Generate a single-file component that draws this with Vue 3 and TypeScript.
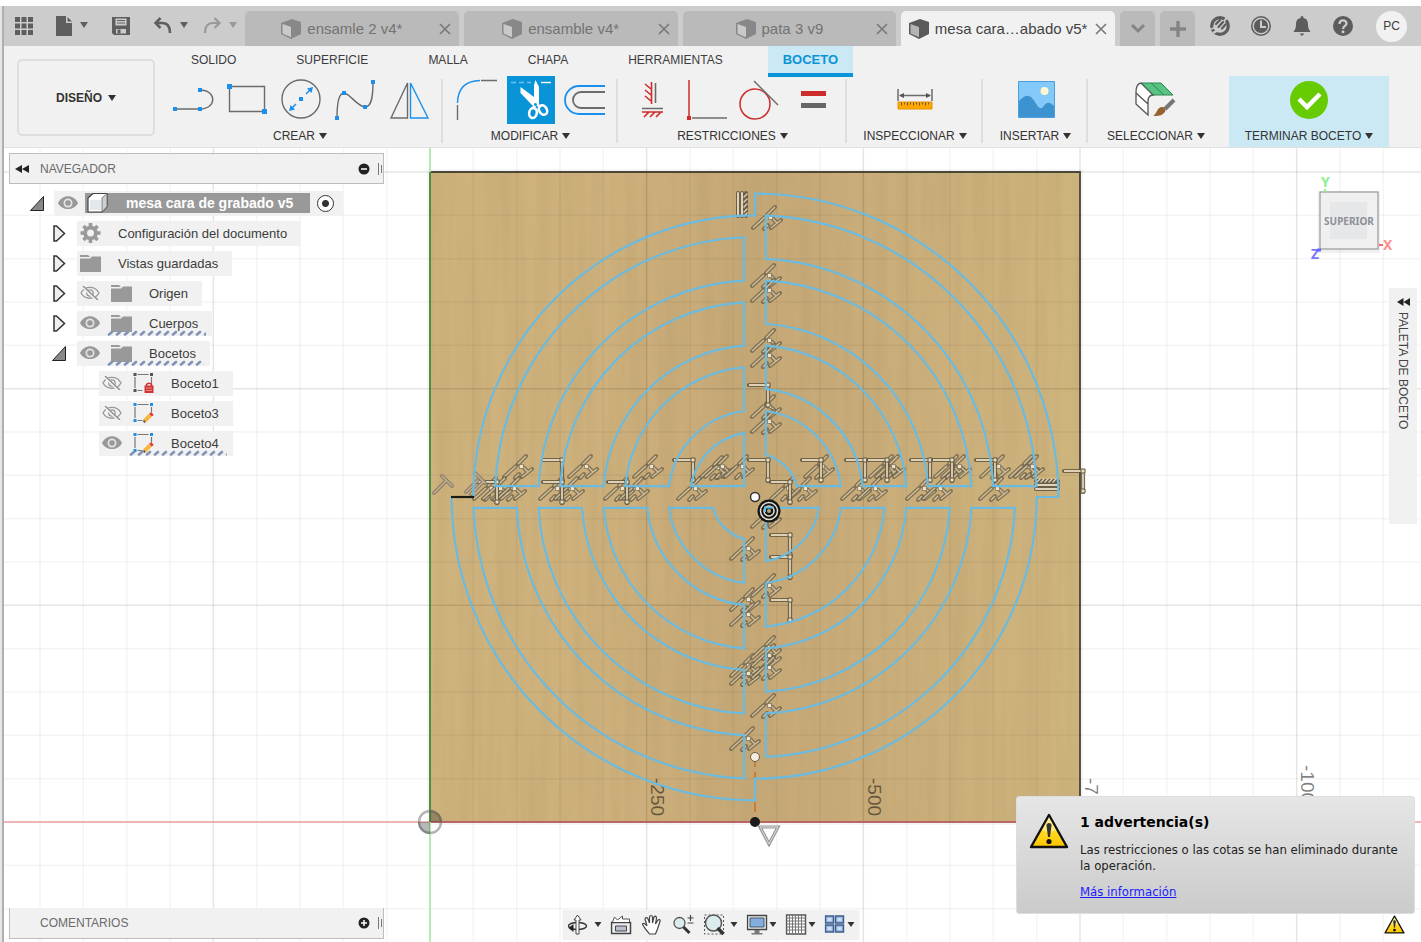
<script setup lang="ts">
import { ref } from 'vue'

interface DocTab { title: string; active: boolean }
const docTabs = ref<DocTab[]>([
  { title: 'ensamle 2 v4*', active: false },
  { title: 'ensamble v4*', active: false },
  { title: 'pata 3 v9', active: false },
  { title: 'mesa cara…abado v5*', active: true },
])

const workspaces = ['SOLIDO', 'SUPERFICIE', 'MALLA', 'CHAPA', 'HERRAMIENTAS', 'BOCETO']
const activeWorkspace = ref('BOCETO')

interface TreeRow {
  label: string
  level: 1 | 2
  open?: boolean
  eye?: 'on' | 'off'
  icon: 'i-gear' | 'i-folder' | 'i-sketch-lock' | 'i-sketch-edit'
  hatched?: boolean
}
const rows = ref<TreeRow[]>([
  { label: 'Configuración del documento', level: 1, open: false, icon: 'i-gear' },
  { label: 'Vistas guardadas', level: 1, open: false, icon: 'i-folder' },
  { label: 'Origen', level: 1, open: false, eye: 'off', icon: 'i-folder' },
  { label: 'Cuerpos', level: 1, open: false, eye: 'on', icon: 'i-folder', hatched: true },
  { label: 'Bocetos', level: 1, open: true, eye: 'on', icon: 'i-folder', hatched: true },
  { label: 'Boceto1', level: 2, eye: 'off', icon: 'i-sketch-lock' },
  { label: 'Boceto3', level: 2, eye: 'off', icon: 'i-sketch-edit' },
  { label: 'Boceto4', level: 2, eye: 'on', icon: 'i-sketch-edit', hatched: true },
])
function toggleEye(row: TreeRow) {
  row.eye = row.eye === 'on' ? 'off' : 'on'
}

// Sketch geometry: concentric quarter rings separated by a cross-shaped gap.
const cx = 755
const cy = 497
const unit = 65 / 6
const along = (r: number) => Math.sqrt(r * r - unit * unit)

function quarterRing(sx: number, sy: number, outer: number, inner: number): string {
  const ro = outer * unit
  const ri = inner * unit
  const sweep = sx * sy < 0 ? 1 : 0
  const pt = (a: number, b: number) => `${(cx + sx * a).toFixed(2)} ${(cy + sy * b).toFixed(2)}`
  let d = `M${pt(unit, along(ro))}A${ro} ${ro} 0 0 ${sweep} ${pt(along(ro), unit)}`
  d += inner === 0
    ? `L${pt(unit, unit)}`
    : `L${pt(along(ri), unit)}A${ri} ${ri} 0 0 ${1 - sweep} ${pt(unit, along(ri))}`
  return d + 'Z'
}
const evenBands = [[24, 20], [18, 14], [12, 8], [6, 0]]
const oddBands = [[26, 22], [20, 16], [14, 10], [8, 4]]
const rings: string[] = [
  ...evenBands.map(([o, i]) => quarterRing(-1, -1, o, i)),
  ...oddBands.map(([o, i]) => quarterRing(1, -1, o, i)),
  ...oddBands.map(([o, i]) => quarterRing(-1, 1, o, i)),
  ...evenBands.map(([o, i]) => quarterRing(1, 1, o, i)),
]
const big = 28 * unit
const mid = 26 * unit
const outline =
  `M${cx - mid} ${cy}A${mid} ${mid} 0 0 1 ${cx} ${cy - mid}V${cy - big}` +
  `A${big} ${big} 0 0 1 ${cx + big} ${cy}H${cx + mid}` +
  `A${mid} ${mid} 0 0 1 ${cx} ${cy + mid}V${cy + big}` +
  `A${big} ${big} 0 0 1 ${cx - big} ${cy}`

// Constraint glyph anchors on the sketch plane.
const parallels: number[][] = [
  [521, 466], [586, 466], [651, 466], [717, 467], [722, 466], [742, 466],
  [491, 488], [500, 488], [514, 488], [557, 488], [572, 488], [622, 488], [637, 488], [695, 488],
  [770, 217], [769, 275], [769, 290], [769, 340], [769, 355], [769, 406], [769, 421],
  [822, 466], [887, 466], [893, 466], [952, 466], [959, 466], [998, 466], [1027, 466], [1032, 466],
  [788, 488], [805, 488], [859, 488], [875, 488], [924, 488], [940, 488], [997, 488],
  [748, 548], [748, 599], [748, 614], [748, 665], [748, 673], [748, 738],
  [769, 516], [769, 585], [769, 647], [769, 655], [769, 667], [769, 705],
]
const perpendiculars: number[][] = [
  [562, 460], [562, 482], [497, 482], [627, 482], [693, 460], [768, 460], [768, 385], [790, 482],
  [821, 460], [865, 460], [887, 460], [930, 460], [952, 460], [995, 460], [1083, 471],
  [790, 535], [790, 557], [790, 600],
]
const step = 130 / 3
const gridX = Array.from({ length: 60 }, (_, i) => i - 9)
const gridY = Array.from({ length: 40 }, (_, i) => i - 15)
const rulerLabels = [
  { text: '-250', x: 651, y: 778 },
  { text: '-500', x: 868, y: 778 },
  { text: '-750', x: 1085, y: 778 },
  { text: '-1000', x: 1301, y: 765 },
]
</script>

<template>
  <div class="app">
    <svg class="defs" width="0" height="0" aria-hidden="true">
      <symbol id="i-caret" viewBox="0 0 8 6"><path d="M0 0h8L4 6z" fill="currentColor" /></symbol>
      <symbol id="i-cube" viewBox="0 0 20 20">
        <path d="M0 4 11 0l9 3v12l-10 5L0 15z" fill="currentColor" />
        <path d="M1.500 5 10 8v10.200L1.500 14.500z" fill="#fff" fill-opacity=".55" />
      </symbol>
      <symbol id="i-close" viewBox="0 0 12 12"><path d="M1 1l10 10M11 1 1 11" stroke="currentColor" stroke-width="1.600" /></symbol>
      <symbol id="i-eye-on" viewBox="0 0 20 14">
        <path d="M0 7C4-2 16-2 20 7 16 15 4 15 0 7z" fill="#999" /><circle cx="10" cy="7" r="4.500" fill="#e4e4e4" /><circle cx="10" cy="7" r="2.800" fill="#999" />
      </symbol>
      <symbol id="i-eye-off" viewBox="0 0 20 14">
        <path d="M1 7c4-7.500 14-7.500 18 0-4 7-14 7-18 0z" fill="none" stroke="#999" stroke-width="1.300" /><circle cx="10" cy="7" r="3.200" fill="none" stroke="#999" stroke-width="1.300" />
        <path d="M2 0l15 14" stroke="#f1f1f1" stroke-width="3" /><path d="M3 0l15 14" stroke="#888" stroke-width="1.300" />
      </symbol>
      <symbol id="i-folder" viewBox="0 0 21 17">
        <path d="M0 0h8l2 2H0zM0 3.500h10l2-2h9V17H0z" fill="#999" />
      </symbol>
      <symbol id="i-gear" viewBox="0 0 20 20">
        <g fill="#999"><circle cx="10" cy="10" r="7.300" />
          <path d="M8.200 0h3.600v20H8.200zM0 8.200h20v3.600H0zM1.700 4.200l2.500-2.500 14.100 14.100-2.500 2.500zM15.800 1.700l2.500 2.500L4.200 18.300l-2.500-2.500z" /></g>
        <circle cx="10" cy="10" r="3.500" fill="#f1f1f1" />
      </symbol>
      <symbol id="i-sketch-lock" viewBox="0 0 20 20">
        <path d="M4 1.500h11M1.500 4v11M18 4v7M4 17.500h5" stroke="#777" stroke-width="1.200" />
        <path d="M0 0h3v3H0zM16.500 0h3v3h-3zM0 16h3v3H0z" fill="#555" />
        <path d="M13 13v-1.500a3 3 0 0 1 5 0V13" fill="none" stroke="#cf2f2f" stroke-width="1.500" /><path d="M11 12.500h9V20h-9z" fill="#d03434" /><path d="M12.500 15h6M12.500 17.500h6" stroke="#e88" />
      </symbol>
      <symbol id="i-sketch-edit" viewBox="0 0 20 20">
        <path d="M4 1.500h11M1.500 4v11M18 4v5M4 17.500h5" stroke="#777" stroke-width="1.200" />
        <path d="M0 0h3v3H0zM16.500 0h3v3h-3zM0 16h3v3H0z" fill="#1d8fe8" />
        <path d="m11 18 6-6" stroke="#f6b73c" stroke-width="4" /><path d="m17 12 2-1.500" stroke="#e5323c" stroke-width="4" /><path d="m10 19 1.500-1" stroke="#555" stroke-width="2.500" />
      </symbol>
      <symbol id="i-warn" viewBox="0 0 40 36">
        <path d="M20 2 38 34H2z" fill="url(#warnFill)" stroke="#111" stroke-width="2.400" stroke-linejoin="round" />
        <path d="M20 4 27 17Q20 21 13 17z" fill="#fff" fill-opacity=".4" />
        <path d="M17.500 12.500a2.500 2.500 0 0 1 5 0L21 24h-2z" fill="#333" /><circle cx="20" cy="28.500" r="2.600" fill="#111" />
      </symbol>
      <linearGradient id="warnFill" x1="0" y1="0" x2="0" y2="1"><stop offset="0" stop-color="#fff04a" /><stop offset="1" stop-color="#ffc400" /></linearGradient>
    </svg>

    <header class="topbar">
      <div class="quick">
        <button class="plain" aria-label="Panel de datos">
          <svg width="18" height="18"><path d="M0 0h5v5H0zM6.500 0h5v5h-5zM13 0h5v5h-5zM0 6.500h5v5H0zM6.500 6.500h5v5h-5zM13 6.500h5v5h-5zM0 13h5v5H0zM6.500 13h5v5h-5zM13 13h5v5h-5z" fill="#5e5e5e" /></svg>
        </button>
        <button class="plain" aria-label="Archivo">
          <svg width="34" height="20"><path d="M1 0h10v7h6v13H1z" fill="#5e5e5e" /><path d="m12.500 1 4.500 4.500h-4.500z" fill="#5e5e5e" /><path d="M25 6h8l-4 6z" fill="#5e5e5e" /></svg>
        </button>
        <button class="plain" aria-label="Guardar">
          <svg width="20" height="18"><path d="M1 0h18v18H3l-2-2z" fill="#5e5e5e" /><path d="M4.500 1.500h11v7h-11zM5 12h10v4.500H5z" fill="#ccc" /><path d="M6 3.500h8M6 6h8" stroke="#5e5e5e" stroke-width="1.200" /><path d="M6.500 12.500h3v4h-3z" fill="#5e5e5e" /></svg>
        </button>
        <div class="history">
          <button class="plain" aria-label="Deshacer">
            <svg width="36" height="20"><path d="M7.500 2 2.500 7l5 5M3 7h6q8 0 8 10" fill="none" stroke="#5e5e5e" stroke-width="2.500" /><path d="M27 6h8l-4 6z" fill="#5e5e5e" /></svg>
          </button>
          <button class="plain" aria-label="Rehacer">
            <svg width="36" height="20"><path d="m11.500 2 5 5-5 5M16 7h-6Q2 7 2 17" fill="none" stroke="#999" stroke-width="2.200" /><path d="M26 6h8l-4 6z" fill="#999" /></svg>
          </button>
        </div>
      </div>
      <nav class="doc-tabs" aria-label="Documentos">
        <div v-for="t in docTabs" :key="t.title" class="doc-tab" :class="{ active: t.active }">
          <button class="plain doc-name"><svg class="cube" width="20" height="20"><use href="#i-cube" /></svg>{{ t.title }}</button>
          <button class="plain doc-close" aria-label="Cerrar"><svg width="12" height="12"><use href="#i-close" /></svg></button>
        </div>
        <button class="plain tab-extra" aria-label="Lista de pestañas"><svg width="16" height="12"><path d="m2 2 6 6 6-6" fill="none" stroke="#858585" stroke-width="3" /></svg></button>
        <button class="plain tab-extra" aria-label="Nueva pestaña"><svg width="16" height="16"><path d="M8 0v16M0 8h16" stroke="#858585" stroke-width="3.500" /></svg></button>
      </nav>
      <div class="account">
        <button class="plain" aria-label="Extensiones">
          <svg width="20" height="20"><circle cx="10" cy="10" r="8.300" fill="none" stroke="#5c5c5c" stroke-width="3.200" /><path d="M11 9 19-1" stroke="#ccc" stroke-width="2" /><path d="M0 13.500 6 11" stroke="#ccc" stroke-width="1.500" /><path d="m6 8 4-4M8.500 11 13 6M12 12.500l3.500-4" stroke="#5c5c5c" stroke-width="2.200" stroke-linecap="round" /><path d="m3 17 7-4" stroke="#ccc" stroke-width="2.500" /></svg>
        </button>
        <button class="plain" aria-label="Estado de trabajos">
          <svg width="20" height="20"><circle cx="10" cy="10" r="10" fill="#5c5c5c" /><circle cx="10" cy="10" r="7.800" fill="none" stroke="#ccc" stroke-width="1.400" /><path d="M10 4.500V11h5" fill="none" stroke="#ccc" stroke-width="2" /></svg>
        </button>
        <button class="plain" aria-label="Notificaciones">
          <svg width="20" height="20"><path d="M10 0q1.500 0 1.500 2c4 1 4.500 4 4.500 7s1 4.500 2.500 7h-17C3 13.500 4 12 4 9s.500-6 4.500-7Q8.500 0 10 0zM7.500 17.500h5L10 20z" fill="#5c5c5c" /></svg>
        </button>
        <button class="plain" aria-label="Ayuda">
          <svg width="20" height="20"><circle cx="10" cy="10" r="10" fill="#5c5c5c" /><path d="M6.500 8c0-5 7-4.500 7-.500 0 2.500-3.500 2.500-3.500 5.500" fill="none" stroke="#ccc" stroke-width="2.300" /><circle cx="10" cy="15.800" r="1.500" fill="#ccc" /></svg>
        </button>
        <button class="plain avatar">PC</button>
      </div>
    </header>

    <section class="ribbon">
      <button class="design">DISEÑO <svg width="8" height="6"><use href="#i-caret" /></svg></button>
      <div class="ribbon-main">
        <nav class="ws-tabs" aria-label="Entornos">
          <button v-for="w in workspaces" :key="w" class="plain ws-tab" :class="{ active: w === activeWorkspace }" @click="activeWorkspace = w">{{ w }}</button>
        </nav>
        <div class="groups">
          <div class="group create">
            <div class="tools">
              <button class="plain tool" aria-label="Línea"><svg width="48" height="48"><path d="M7 33h25M32 14c17 0 17 19 0 19" fill="none" stroke="#6b6b6b" stroke-width="1.400" /><path d="M5 31h4v4H5zM30 31h4v4h-4zM30 12h4v4h-4z" fill="#1b8fea" /></svg></button>
              <button class="plain tool" aria-label="Rectángulo"><svg width="48" height="48"><path d="M7.500 10.500h35v25h-35z" fill="none" stroke="#6b6b6b" stroke-width="1.400" /><path d="M5 8h5v5H5zM40 33h5v5h-5z" fill="#1b8fea" /></svg></button>
              <button class="plain tool" aria-label="Círculo"><svg width="48" height="48"><circle cx="25" cy="23" r="19" fill="none" stroke="#6b6b6b" stroke-width="1.400" /><path d="m15 33 5-5m10-10 5-5" stroke="#1b8fea" stroke-width="1.500" /><path d="M23 21h4v4h-4zM37 11l-1.500 6-4.500-4.500zM13 35l1.500-6 4.500 4.500z" fill="#1b8fea" /></svg></button>
              <button class="plain tool" aria-label="Spline"><svg width="48" height="48"><path d="M7 42C7 28 9 17 14 17S28 31 35 31c6 0 8-8 8-25" fill="none" stroke="#6b6b6b" stroke-width="1.400" /><path d="M5 40h4v4H5zM12 15h4v4h-4zM33 29h4v4h-4zM41 4h4v4h-4z" fill="#1b8fea" /></svg></button>
              <button class="plain tool" aria-label="Simetría"><svg width="48" height="48"><path d="M23.500 7v35H7z" fill="none" stroke="#6b6b6b" stroke-width="1.400" /><path d="M26.500 7v35H44z" fill="none" stroke="#1b8fea" stroke-width="1.400" /></svg></button>
            </div>
            <button class="plain glabel">CREAR <svg width="8" height="6"><use href="#i-caret" /></svg></button>
          </div>
          <div class="group modify">
            <div class="tools">
              <button class="plain tool" aria-label="Empalme"><svg width="48" height="48"><path d="M4.500 27Q5 5 27 4.500" fill="none" stroke="#1b8fea" stroke-width="1.400" /><path d="M4.500 29v15M28 4.500h16" stroke="#6b6b6b" stroke-width="1.400" /></svg></button>
              <button class="plain tool trim" aria-label="Recortar"><svg width="48" height="48">
                <path d="M4 6.500h5m3 0h5m3 0h4" stroke="#6cc0ee" stroke-width="1.400" /><path d="M34 6.500h10" stroke="#fff" stroke-width="1.400" />
                <path d="M28.500 4 32 11v17l-4 3-3-2-11.500-12V11L27 21V9z" fill="#fff" />
                <ellipse cx="26" cy="37" rx="3.800" ry="5" fill="none" stroke="#fff" stroke-width="2.600" transform="rotate(12 26 37)" /><ellipse cx="36" cy="34" rx="3.800" ry="5" fill="none" stroke="#fff" stroke-width="2.600" transform="rotate(-32 36 34)" /><path d="m26 32 3-4 5 3" fill="none" stroke="#fff" stroke-width="2.500" /><circle cx="28.500" cy="28.500" r="1.500" fill="#0a94d8" /></svg></button>
              <button class="plain tool" aria-label="Desfase"><svg width="48" height="48"><path d="M44 10H18a14 14 0 0 0 0 28h26" fill="none" stroke="#1b8fea" stroke-width="1.800" /><path d="M44 16H20a8 8 0 0 0 0 16h24" fill="none" stroke="#6b6b6b" stroke-width="1.800" /></svg></button>
            </div>
            <button class="plain glabel">MODIFICAR <svg width="8" height="6"><use href="#i-caret" /></svg></button>
          </div>
          <div class="group restrict">
            <div class="tools">
              <button class="plain tool" aria-label="Horizontal/Vertical"><svg width="48" height="48"><path d="M23.500 6v22M14 36h21M17 8l6 5M17 14l6 5M17 20l6 5M16 41l5-5M22 41l5-5M28 41l5-5" stroke="#ce2c2c" stroke-width="1.600" /><path d="M27.500 7v20M14 32.500h21" stroke="#6b6b6b" stroke-width="1.600" /></svg></button>
              <button class="plain tool" aria-label="Coincidente"><svg width="48" height="48"><path d="M7 4v36" stroke="#ce2c2c" stroke-width="1.500" /><path d="M5 40h4v4H5z" fill="#ce2c2c" /><path d="M10 42h35" stroke="#6b6b6b" stroke-width="1.500" /></svg></button>
              <button class="plain tool" aria-label="Tangente"><svg width="48" height="48"><circle cx="19" cy="28" r="15" fill="none" stroke="#ce2c2c" stroke-width="1.500" /><path d="m18 5 24 24" stroke="#6b6b6b" stroke-width="1.500" /></svg></button>
              <button class="plain tool" aria-label="Igual"><svg width="48" height="48"><path d="M11 15h25v5H11z" fill="#ce2c2c" /><path d="M11 27h25v5H11z" fill="#666" /></svg></button>
            </div>
            <button class="plain glabel">RESTRICCIONES <svg width="8" height="6"><use href="#i-caret" /></svg></button>
          </div>
          <div class="group inspect">
            <div class="tools">
              <button class="plain tool" aria-label="Medir"><svg width="48" height="48"><path d="M7 13v12M41 13v12M9 19.500h30" stroke="#6b6b6b" stroke-width="1.500" /><path d="m8 19.500 5-2.500v5zM40 19.500 35 17v5z" fill="#555" /><path d="M7 26h34v7H7z" fill="#ffa800" stroke="#e59200" /><path d="M10.500 26.500v3m3-3v2m3-2v3m3-3v2m3-2v3m3-3v2m3-2v3m3-3v2m3-2v3m3-3v2" stroke="#654" /></svg></button>
            </div>
            <button class="plain glabel">INSPECCIONAR <svg width="8" height="6"><use href="#i-caret" /></svg></button>
          </div>
          <div class="group insert">
            <div class="tools">
              <button class="plain tool" aria-label="Insertar imagen"><svg width="48" height="48"><path d="M6.500 5.500h36v36h-36z" fill="#83c9fa" stroke="#4b9fdc" /><circle cx="32.500" cy="15" r="4" fill="#fff8cf" /><path d="M7 25c7-7 11-7 16 1 3 5 5 8 8 5 4-6 7-5 11-1v11H7z" fill="#3d93cf" /></svg></button>
            </div>
            <button class="plain glabel">INSERTAR <svg width="8" height="6"><use href="#i-caret" /></svg></button>
          </div>
          <div class="group pick">
            <div class="tools">
              <button class="plain tool" aria-label="Seleccionar"><svg width="48" height="48"><path d="M9 7h20l12 12H21z" fill="#57c581" stroke="#2d8753" /><path d="m19 7 13 12" stroke="#2d8753" /><path d="M9 7Q4 8 4 16v12l12 11V26q0-7 5-7L9 7M4 17l12 11" fill="#fff" stroke="#555" stroke-width="1.300" /><path d="m42 24-9 9" stroke="#777" stroke-width="4" /><path d="M21 40c4-2 4-9 9-9 4 0 5 4 1 7-3 2-6 2-10 2z" fill="#946330" /></svg></button>
            </div>
            <button class="plain glabel">SELECCIONAR <svg width="8" height="6"><use href="#i-caret" /></svg></button>
          </div>
          <div class="group finish">
            <div class="tools">
              <button class="plain tool" aria-label="Terminar"><svg width="48" height="48"><circle cx="24" cy="24" r="19" fill="#66cb00" /><path d="m14 23 8 8 13-13" fill="none" stroke="#fff" stroke-width="4.500" /></svg></button>
            </div>
            <button class="plain glabel">TERMINAR BOCETO <svg width="8" height="6"><use href="#i-caret" /></svg></button>
          </div>
        </div>
      </div>
    </section>

    <main class="workspace">
      <svg class="scene" width="100%" height="100%" role="img" aria-label="Boceto de círculos concéntricos">
        <defs>
          <linearGradient id="wood" x1="0" x2="1" y1="0" y2="0">
            <stop offset="0" stop-color="#cfb37d" /><stop offset=".28" stop-color="#cdb07b" /><stop offset=".5" stop-color="#c5a876" />
            <stop offset=".53" stop-color="#c6a977" /><stop offset=".75" stop-color="#cbaf7b" /><stop offset="1" stop-color="#ceb47d" />
          </linearGradient>
          <filter id="grain" x="0" y="0" width="100%" height="100%">
            <feTurbulence type="fractalNoise" baseFrequency="0.08 0.004" numOctaves="3" seed="8" />
            <feColorMatrix values="0 0 0 0 .4  0 0 0 0 .28  0 0 0 0 .12  .38 0 0 0 -.13" />
          </filter>
          <g id="parallel">
            <path d="M-17 11-5 0M-3-2 5-10M-6 12-2 8M1 11 11 3M2 1l5 5" fill="none" stroke="#6a5e47" stroke-width="4" stroke-linecap="round" opacity=".75" />
            <path d="M-17 11-5 0M-3-2 5-10M-6 12-2 8M1 11 11 3M2 1l5 5" fill="none" stroke="#cdbd9b" stroke-width="1.600" />
            <path d="M-1.500-1.500h4v4h-4z" fill="#eee3ca" stroke="#6c604b" stroke-width=".6" />
          </g>
          <g id="perp">
            <path d="M-19 0H0V21" fill="none" stroke="#62563f" stroke-width="4.200" stroke-linecap="round" opacity=".85" />
            <path d="M-19 0H0V21" fill="none" stroke="#dfd1b4" stroke-width="1.800" />
            <path d="M-2-2h4v4h-4zM-2 18h4v4h-4z" fill="#eadfc6" stroke="#5f533d" />
          </g>
        </defs>
        <g transform="translate(0 -148)">
          <rect x="427" y="169" width="656" height="656" fill="#000" opacity=".04" />
          <rect x="430" y="172" width="650" height="650" fill="url(#wood)" />
          <rect x="430" y="172" width="650" height="650" filter="url(#grain)" />
          <g stroke="#000">
            <line v-for="i in gridX" :key="'x' + i" :x1="430 + i * step" :x2="430 + i * step" y1="148" y2="2400" :stroke-opacity="i % 5 === 0 ? 0.1 : 0.045" stroke-width="1.500" />
            <line v-for="i in gridY" :key="'y' + i" x1="0" x2="3200" :y1="822 + i * step" :y2="822 + i * step" :stroke-opacity="i % 5 === 0 ? 0.1 : 0.045" stroke-width="1.500" />
          </g>
          <path d="M430 172h650v650" fill="none" stroke="#4a4638" stroke-width="1.800" />
          <path d="M0 822h3200" stroke="#f0a3a3" stroke-width="1.600" /><path d="M430 822h650" stroke="#a85050" stroke-width="1.600" />
          <path d="M430 148v2200" stroke="#aeeaae" stroke-width="1.800" /><path d="M430 172v650" stroke="#4f8c46" stroke-width="2" />
          <circle cx="430" cy="822" r="11" fill="none" stroke="#777" stroke-opacity=".55" stroke-width="2.400" />
          <path d="M430 822v-12a12 12 0 0 1 12 12zM430 822v12a12 12 0 0 1-12-12z" fill="#333" fill-opacity=".35" />
          <g class="ruler">
            <text v-for="l in rulerLabels" :key="l.text" :transform="`translate(${l.x} ${l.y}) rotate(90)`">{{ l.text }}</text>
          </g>
          <path d="M755 757v65" stroke="#cc7a35" stroke-width="2" stroke-dasharray="10 5" />

          <use v-for="(p, i) in parallels" :key="'p' + i" href="#parallel" :x="p[0]" :y="p[1]" />
          <use v-for="(p, i) in perpendiculars" :key="'q' + i" href="#perp" :x="p[0]" :y="p[1]" />
          <g fill="none" stroke-linecap="round">
            <path d="m434 493 12-12m-4-5 10 10M466 492l12-12M471 494l12-12m-8-9 10 10" stroke="#85796a" stroke-width="3.800" />
            <path d="m434 493 12-12m-4-5 10 10M466 492l12-12M471 494l12-12m-8-9 10 10" stroke="#c4b28c" stroke-width="1.600" />
            <path d="M738 193v23M742 193v23M746 193v23M1036 489h22M1036 485h22M1036 481h22" stroke="#6b5f4a" stroke-width="4" />
            <path d="M738 193v23M742 193v23M1036 489h22M1036 485h22" stroke="#e0d3b8" stroke-width="2" />
            <path d="m744 197 3-3m-3 8 3-3m-3 8 3-3m-3 8 3-3m-3 7 3-3M1037 482l3-3m1 3 3-3m1 3 3-3m1 3 3-3m1 3 3-3" stroke="#e0d3b8" stroke-width="1.300" />
          </g>
          <g fill="none" stroke="#6bbbe0" stroke-width="2.200">
            <path v-for="(d, i) in rings" :key="'r' + i" :d="d" />
            <path :d="outline" />
          </g>
          <path d="M451 497h23" stroke="#1c1a14" stroke-width="2.200" />
          <circle cx="755" cy="497" r="4.500" fill="#fff" stroke="#333" stroke-width="1.500" />
          <circle cx="755" cy="757" r="4.500" fill="#f3ecdf" stroke="#6a5b44" />
          <circle cx="755" cy="822" r="5" fill="#1c1a1a" />
          <circle cx="769" cy="511" r="11.500" fill="#141414" />
          <g fill="none" stroke="#e7e2d6" stroke-width="1.500"><circle cx="769" cy="511" r="8.500" /><circle cx="769" cy="511" r="5" /></g>
          <circle cx="769" cy="511" r="2" fill="#b7a680" />
          <path d="M765 512v-4.500h9" fill="none" stroke="#6bbbe0" stroke-width="2" />
          <path d="M760 827h18l-9 17z" fill="#fff" stroke="#999" stroke-width="3.200" /><path d="M760 827h18l-9 17z" fill="none" stroke="#ddd" />
        </g>
      </svg>

      <aside class="browser">
        <div class="panel-head">
          <svg width="14" height="8"><path d="M7 0v8L0 4zM14 0v8L7 4z" fill="#222" /></svg>
          <span class="panel-title">NAVEGADOR</span>
          <button class="plain" aria-label="Contraer"><svg width="12" height="12"><circle cx="6" cy="6" r="5.500" fill="#222" /><path d="M3 6h6" stroke="#fff" stroke-width="1.500" /></svg></button>
          <svg class="grip" width="4" height="14"><path d="M.500 1v12M3.500 3v8" stroke="#777" /></svg>
        </div>
        <ul class="tree">
          <li class="row root">
            <button class="plain arrow" aria-label="Contraer mesa cara de grabado"><svg width="14" height="15"><path d="M13.500.500v14H.500z" fill="#888" stroke="#222" /></svg></button>
            <div class="chip root-chip">
              <button class="plain" aria-label="Visibilidad"><svg width="20" height="14"><use href="#i-eye-on" /></svg></button>
              <span class="root-name">
                <svg width="22" height="20"><path d="M1 5l5-4.500h14v13L15 19H1z" fill="#fff" stroke="#444" stroke-width="1.200" stroke-linejoin="round" /><path d="M3 7h11v10H3z" fill="#e5e7ee" /><path d="m15 19 5-5.500V.500L15 5z" fill="#cfd0d4" stroke="#666" stroke-width=".8" /></svg>
                mesa cara de grabado v5
              </span>
              <input class="activate" type="radio" name="component" checked aria-label="Activar componente" />
            </div>
          </li>
          <li v-for="r in rows" :key="r.label" class="row" :class="'level' + r.level">
            <button v-if="r.level === 1" class="plain arrow" :aria-label="'Desplegar ' + r.label" @click="r.open = !r.open">
              <svg v-if="r.open" width="14" height="15"><path d="M13.500.500v14H.500z" fill="#888" stroke="#222" /></svg>
              <svg v-else width="14" height="17"><path d="M2 1v15h2.500L12.500 8.500 4.500 1z" fill="#eee" stroke="#333" stroke-width="1.500" /></svg>
            </button>
            <div class="chip">
              <button v-if="r.eye" class="plain" :aria-label="'Visibilidad de ' + r.label" @click="toggleEye(r)"><svg width="20" height="14"><use :href="'#i-eye-' + r.eye" /></svg></button>
              <span class="node">
                <svg class="node-icon" :class="r.icon" width="21" height="20"><use :href="'#' + r.icon" /></svg>
                <span>{{ r.label }}</span>
                <svg v-if="r.hatched" class="hatch" width="100%" height="6"><defs><pattern :id="'h-' + r.label" width="8" height="6" patternUnits="userSpaceOnUse"><path d="M2 4.500 5 2" stroke="#8093b6" stroke-width="2.600" stroke-linecap="round" /></pattern></defs><rect width="100%" height="6" :fill="`url(#h-${r.label})`" /></svg>
              </span>
            </div>
          </li>
        </ul>
      </aside>

      <div class="viewcube">
        <svg width="96" height="96" role="img" aria-label="Cubo de vistas">
          <rect x="14" y="19" width="62" height="62" fill="#000" opacity=".06" />
          <rect x="16" y="20" width="58" height="57" fill="#f0f0f0" stroke="#888" /><rect x="26" y="30" width="37" height="37" fill="#e6e7e9" />
          <text class="face" x="45" y="53" text-anchor="middle">SUPERIOR</text>
          <text class="axis" x="17" y="15" fill="#8cf08c">Y</text><text class="axis" x="79" y="78" fill="#ff8f8f">X</text><text class="axis" x="7" y="87" fill="#7676ff">Z</text>
          <path d="M21 17v3" stroke="#8cf08c" stroke-width="2" /><path d="M75 73h4" stroke="#f66" stroke-width="2" /><path d="m13 78 4 0" stroke="#66f" stroke-width="3" />
        </svg>
      </div>

      <button class="palette"><svg width="13" height="8"><path d="M6.500 0v8L0 4zM13 0v8L6.500 4z" fill="#222" /></svg><span>PALETA DE BOCETO</span></button>

      <div class="panel-head comments">
        <span class="panel-title">COMENTARIOS</span>
        <button class="plain" aria-label="Expandir"><svg width="12" height="12"><circle cx="6" cy="6" r="5.500" fill="#222" /><path d="M3 6h6M6 3v6" stroke="#fff" stroke-width="1.500" /></svg></button>
        <svg class="grip" width="4" height="14"><path d="M.500 1v12M3.500 3v8" stroke="#777" /></svg>
      </div>

      <div class="viewbar" role="toolbar" aria-label="Navegación">
        <button class="plain" aria-label="Órbita"><svg width="34" height="22"><ellipse cx="10" cy="12" rx="9" ry="3.500" fill="none" stroke="#333" stroke-width="1.500" /><path d="M8.500 20V6H6.500L10 1l3.500 5h-2v14z" fill="#fff" stroke="#444" /><path d="m1 14 5-4v8z" fill="#222" /><path d="M27 8h7l-3.500 5z" fill="#333" /></svg></button>
        <button class="plain" aria-label="Mirar a"><svg width="22" height="22"><path d="M1 8.500h19v11H1z" fill="#eee" stroke="#444" stroke-width="1.500" /><path d="M5 12h11v5H5z" fill="#b9bfcb" stroke="#445" /><path d="M2 8 4 3l3 3 5-4v3h7v3" fill="#fff" stroke="#555" /></svg></button>
        <button class="plain" aria-label="Encuadre"><svg width="22" height="22"><path d="M8 20C5 16 2 13 1 10c1-1.500 3 0 4.500 2L3.500 5C4 3 6 3.500 6.500 5L8 9 8 3c.500-2 2.500-2 3 0v6l1.500-6c1-1.500 2.500-.500 2.500 1l-1 6 2.500-4c1.500-1 2.500 0 2 1.500L16 15l-2 5z" fill="#fff" stroke="#444" stroke-width="1.200" /></svg></button>
        <button class="plain" aria-label="Zoom"><svg width="22" height="22"><circle cx="7" cy="9" r="5.500" fill="#dcebee" stroke="#555" stroke-width="1.300" /><path d="m11 13 6 6" stroke="#333" stroke-width="3" /><path d="M18 1v6M15 4h6M15 9h6" stroke="#444" stroke-width="1.200" /></svg></button>
        <button class="plain" aria-label="Ajustar"><svg width="34" height="22"><path d="M1 1h19v19H1z" fill="none" stroke="#555" stroke-dasharray="2 2" /><circle cx="10" cy="9" r="8" fill="#dcebee" stroke="#555" stroke-width="1.500" /><path d="m14 14 6 6" stroke="#333" stroke-width="3.500" /><path d="M27 8h7l-3.500 5z" fill="#333" /></svg></button>
        <button class="plain" aria-label="Visualización"><svg width="30" height="22"><path d="M1 1.500h19v14H1z" fill="#eee" stroke="#444" stroke-width="1.400" /><path d="M3.500 4h14v9h-14z" fill="#85aee0" stroke="#456" /><path d="M8 16h5v3h3v1.500H5V19h3z" fill="#777" /><path d="M23 8h7l-3.500 5z" fill="#333" /></svg></button>
        <button class="plain" aria-label="Rejilla"><svg width="30" height="22"><path d="M1 1h19v19H1z" fill="#fff" stroke="#555" stroke-width="1.500" /><path d="M4 1v19M7 1v19M10 1v19M13 1v19M16 1v19M1 4h19M1 7h19M1 10h19M1 13h19M1 16h19" stroke="#777" /><path d="M23 8h7l-3.500 5z" fill="#333" /></svg></button>
        <button class="plain" aria-label="Ventanas"><svg width="30" height="22"><g fill="#9dbbe0" stroke="#3b5d8c" stroke-width="1.400"><path d="M1 2h8v7H1zM11 2h8v7h-8zM1 11h8v7H1zM11 11h8v7h-8z" /></g><path d="M3 4h4v3H3zM13 4h4v3h-4zM3 13h4v3H3zM13 13h4v3h-4z" fill="#cfe0f5" /><path d="M23 8h7l-3.500 5z" fill="#333" /></svg></button>
      </div>

      <section class="notice" role="alert">
        <svg width="40" height="36"><use href="#i-warn" /></svg>
        <div class="notice-body">
          <h2>1 advertencia(s)</h2>
          <p>Las restricciones o las cotas se han eliminado durante la operación.</p>
          <a href="#info">Más información</a>
        </div>
      </section>
      <button class="plain status-warn" aria-label="Advertencias"><svg width="21" height="19"><use href="#i-warn" /></svg></button>
    </main>
  </div>
</template>

<style>
body { margin: 0; background: #fff; }
</style>

<style scoped>
.app {
  position: relative;
  display: flex;
  flex-direction: column;
  min-height: 100vh;
  padding-top: 6px;
  box-sizing: border-box;
  font-family: "Liberation Sans", Arial, sans-serif;
  font-size: 12px;
  color: #3c3c3c;
}
.app::after {
  content: "";
  position: absolute;
  top: 6px;
  bottom: 0;
  left: 0;
  width: 2px;
  background: #e6e6e6;
  border-right: 2px solid #b0b0b0;
}
.defs { position: absolute; }
svg { display: block; flex: none; }
.plain {
  display: flex;
  align-items: center;
  border: 0;
  padding: 0;
  margin: 0;
  background: none;
  font: inherit;
  color: inherit;
}

.topbar {
  display: flex;
  height: 40px;
  background: #ccc;
}
.quick {
  display: flex;
  align-items: center;
  gap: 22px;
  width: 230px;
  padding-left: 15px;
  flex: none;
}
.history { display: flex; gap: 14px; }
.doc-tabs {
  display: flex;
  align-items: flex-end;
  gap: 5px;
  flex: 0 1 950px;
  min-width: 0;
}
.doc-tab {
  display: flex;
  align-items: center;
  flex: 0 1 214px;
  min-width: 0;
  height: 35px;
  padding-right: 8px;
  box-sizing: border-box;
  border-radius: 5px 5px 0 0;
  background: #bababa;
  color: #737373;
}
.doc-tab.active { background: #f1f1f1; color: #424242; }
.doc-name {
  flex: 1;
  justify-content: center;
  gap: 6px;
  min-width: 0;
  height: 100%;
  font-size: 15px;
  white-space: nowrap;
}
.cube { color: #888; }
.active .cube { color: #5a5a5a; }
.doc-close { color: #777; }
.tab-extra {
  justify-content: center;
  width: 35px;
  height: 35px;
  flex: none;
  border-radius: 5px 5px 0 0;
  background: #bababa;
}
.account {
  display: flex;
  align-items: center;
  gap: 21px;
  margin-left: auto;
  padding-right: 14px;
}
.avatar {
  justify-content: center;
  width: 31px;
  height: 31px;
  margin-left: 2px;
  border-radius: 50%;
  background: #f1f1f1;
}

.ribbon {
  display: flex;
  height: 101px;
  background: #f1f1f1;
  border-bottom: 1px solid #e0e0e0;
}
.design {
  display: flex;
  align-items: center;
  justify-content: center;
  gap: 6px;
  flex: none;
  width: 138px;
  height: 77px;
  margin: 13px 2px 0 17px;
  border: 2px solid #dedede;
  border-radius: 5px;
  background: #f1f1f1;
  font: bold 12px "Liberation Sans", Arial, sans-serif;
  color: #333;
}
.ribbon-main { flex: 1; min-width: 0; }
.ws-tabs {
  display: flex;
  gap: 30px;
  height: 30px;
  padding-left: 19px;
}
.ws-tab { padding: 0 15px; height: 28px; }
.ws-tab.active {
  height: 31px;
  border-bottom: 4px solid #0a94d8;
  background: #cbe9f5;
  color: #0a94d8;
  font-weight: bold;
  font-size: 13px;
}
.groups { display: flex; }
.group {
  position: relative;
  display: flex;
  flex-direction: column;
  align-items: center;
  height: 71px;
  box-sizing: border-box;
}
.group::after {
  content: "";
  position: absolute;
  right: 0;
  top: 3px;
  width: 2px;
  height: 64px;
  background: #dedede;
}
.create { width: 286px; }
.modify { width: 175px; }
.restrict { width: 229px; }
.inspect { width: 136px; }
.insert { width: 105px; }
.pick { width: 136px; margin-right: 5px; }
.finish { width: 160px; background: #cbe9f5; }
.pick::after, .finish::after { display: none; }
.tools { display: flex; gap: 6px; height: 48px; }
.trim { background: #0a94d8; }
.glabel { gap: 4px; height: 23px; white-space: nowrap; color: #333; }

.workspace {
  position: relative;
  flex: 1;
  min-height: 480px;
  overflow: hidden;
}
.scene { position: absolute; left: 0; top: 0; }
.ruler { font-size: 19px; fill: #000; fill-opacity: 0.5; }
.browser { position: relative; width: 375px; padding: 5px 0 0 9px; }
.panel-head {
  display: flex;
  align-items: center;
  gap: 11px;
  height: 31px;
  padding: 0 1px 0 5px;
  border: 1px solid #bdbdbd;
  box-sizing: border-box;
  background: #f1f1f1;
  color: #6b6b6b;
}
.panel-title { flex: 1; }
.grip { margin-left: -3px; }
.tree {
  list-style: none;
  margin: 4px 0 0;
  padding: 0;
  font-size: 13px;
}
.row { display: flex; align-items: center; height: 30px; }
.root { padding-left: 21px; }
.level1 { padding-left: 43px; }
.level2 { padding-left: 90px; }
.arrow { width: 25px; }
.root .arrow { width: 24px; }
.chip {
  display: flex;
  align-items: center;
  gap: 11px;
  height: 25px;
  padding: 0 14px 0 3px;
  background: #f1f1f1;
}
.root-chip { gap: 7px; padding: 0 9px 0 4px; }
.root-name {
  display: flex;
  align-items: center;
  gap: 17px;
  height: 20px;
  padding: 0 17px 0 2px;
  background: #999;
  color: #fff;
  font-weight: bold;
  font-size: 14px;
}
.activate {
  appearance: none;
  width: 17px;
  height: 17px;
  margin: 0;
  border: 1px solid #333;
  border-radius: 50%;
  background: radial-gradient(circle, #333 3px, #fff 4px);
}
.node { position: relative; display: flex; align-items: center; gap: 17px; height: 25px; }
.node-icon.i-folder { height: 17px; }
.hatch { position: absolute; left: -4px; bottom: 0; width: calc(100% + 12px); }

.viewcube { position: absolute; right: 21px; top: 24px; }
.face { font: bold 10px "Noto Sans", sans-serif; fill: #8d9096; }
.axis { font: bold 14px "Noto Sans", sans-serif; }
.palette {
  position: absolute;
  right: 4px;
  top: 140px;
  display: flex;
  flex-direction: column;
  align-items: center;
  gap: 6px;
  width: 28px;
  height: 236px;
  padding: 10px 0 0;
  border: 0;
  background: #f1f1f1;
  font: 12px "Liberation Sans", Arial, sans-serif;
  color: #444;
}
.palette span { writing-mode: vertical-rl; white-space: nowrap; }
.comments {
  position: absolute;
  left: 9px;
  bottom: 3px;
  width: 375px;
  padding-left: 30px;
  border-top: 0;
}
.viewbar {
  position: absolute;
  left: 50%;
  bottom: 2px;
  transform: translateX(-50%);
  display: flex;
  align-items: center;
  gap: 9px;
  height: 30px;
  padding: 0 5px;
  background: #f1f1f1;
}
.notice {
  position: absolute;
  right: 6px;
  bottom: 28px;
  display: flex;
  align-items: flex-start;
  gap: 11px;
  width: 399px;
  height: 118px;
  padding: 16px 8px 0 12px;
  box-sizing: border-box;
  border: 1px solid #ddd;
  border-radius: 3px;
  background: linear-gradient(#e6e6e6, #cbcbcb);
  font-family: "DejaVu Sans Condensed", "DejaVu Sans", sans-serif;
  font-size: 13px;
  color: #222;
}
.notice h2 {
  margin: 0 0 11px;
  font: bold 14px/18px "DejaVu Sans", sans-serif;
  color: #000;
}
.notice p { margin: 0 0 10px; line-height: 16px; }
.notice a { color: #1a1aff; line-height: 16px; }
.status-warn { position: absolute; right: 16px; bottom: 8px; }
</style>
